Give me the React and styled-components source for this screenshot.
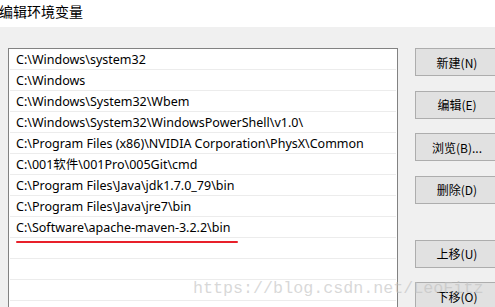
import React from 'react'
import { styled, createGlobalStyle } from 'styled-components'

const GlobalStyle = createGlobalStyle`
  html, body {
    margin: 0;
    padding: 0;
    background: #f0f0f0;
    overflow: hidden;
  }
  body {
    font-family: "Noto Sans", "Noto Sans CJK SC", sans-serif;
    color: #000000;
  }
`;

const Window = styled.div`
  position: relative;
  width: 495px;
  height: 307px;
  overflow: hidden;
  background: #f0f0f0;
`;

const TitleBar = styled.div`
  height: 27px;
  background: #FFFFFF;
  font-family: "Noto Sans CJK SC", sans-serif;
  font-size: 14px;
  line-height: 22px;
  padding-left: 0;
  margin-left: -1px;
`;

const Content = styled.div`
  display: flex;
  gap: 17px;
  padding: 21px 0 0 8px;
`;

const PathList = styled.div`
  width: 388px;
  height: 280px;
  flex-shrink: 0;
  background: #FFFFFF;
  border: 1px solid #828282;
`;

const Row = styled.div`
  position: relative;
  height: 20px;
  margin: 0 1px 0 1px;
  border-bottom: 1px solid #ececec;
  padding-left: 6px;
  font-size: 12.5px;
  line-height: 21px;
  white-space: nowrap;

  ${({ $marked }) => $marked && `
    &::after {
      content: '';
      position: absolute;
      left: 6px;
      width: 222px;
      bottom: -6px;
      height: 2px;
      background: #e8202a;
      border-radius: 1px;
      z-index: 2;
    }
  `}
`;

const ButtonColumn = styled.div`
  display: flex;
  flex-direction: column;
  gap: 14.5px;
`;

const Button = styled.div`
  width: 82px;
  height: 26px;
  flex-shrink: 0;
  box-sizing: content-box;
  background: #e1e1e1;
  border: 1px solid #adadad;
  display: flex;
  align-items: center;
  justify-content: center;
  font-family: "Noto Sans CJK SC", sans-serif;
  font-size: 12px;
  margin-top: ${({ $spaced }) => ($spaced ? '21.5px' : '0')};
`;

const Watermark = styled.div`
  position: absolute;
  left: 193px;
  top: 279px;
  font-family: "Liberation Mono", monospace;
  font-size: 16.7px;
  color: rgba(190, 190, 190, 0.6);
  white-space: nowrap;
  pointer-events: none;
`;

const paths = [
  'C:\\Windows\\system32',
  'C:\\Windows',
  'C:\\Windows\\System32\\Wbem',
  'C:\\Windows\\System32\\WindowsPowerShell\\v1.0\\',
  'C:\\Program Files (x86)\\NVIDIA Corporation\\PhysX\\Common',
  'C:\\001软件\\001Pro\\005Git\\cmd',
  'C:\\Program Files\\Java\\jdk1.7.0_79\\bin',
  'C:\\Program Files\\Java\\jre7\\bin',
  'C:\\Software\\apache-maven-3.2.2\\bin',
  '',
  '',
  '',
]

const buttons = [
  { label: '新建(N)' },
  { label: '编辑(E)' },
  { label: '浏览(B)...' },
  { label: '删除(D)' },
  { label: '上移(U)', spaced: true },
  { label: '下移(O)' },
]

export default function App() {
  return (
    <Window>
      <GlobalStyle />
      <TitleBar>编辑环境变量</TitleBar>
      <Content>
        <PathList>
          {paths.map((p, i) => (
            <Row key={i} $marked={i === 8}>{p}</Row>
          ))}
        </PathList>
        <ButtonColumn>
          {buttons.map((b) => (
            <Button key={b.label} $spaced={b.spaced}>{b.label}</Button>
          ))}
        </ButtonColumn>
      </Content>
      <Watermark>https://blog.csdn.net/LeoFitz</Watermark>
    </Window>
  )
}
